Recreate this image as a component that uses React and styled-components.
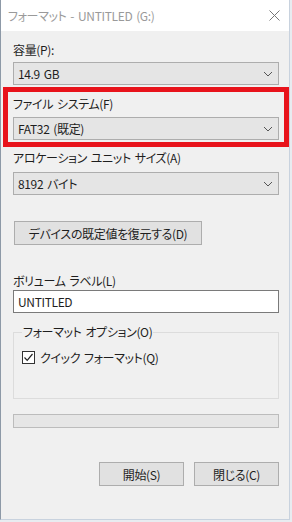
import React from "react";
import styled, { createGlobalStyle } from "styled-components";

const GlobalStyle = createGlobalStyle`
  html, body {
    margin: 0;
    padding: 0;
    background: #e8ecf0;
  }
  body {
    font-family: "Noto Sans CJK JP", "Liberation Sans", sans-serif;
    font-feature-settings: "palt" 1;
    font-size: 12px;
    letter-spacing: -0.35px;
    word-spacing: 1.5px;
    color: #1e1e1e;
  }
`;

const Window = styled.div`
  width: 290px;
  height: 520px;
  box-sizing: border-box;
  border-left: 1px solid #8d99a7;
  border-right: 1px solid #c8d2de;
  border-bottom: 1px solid #c8d2de;
  background: #f0f0f0;
  display: flex;
  flex-direction: column;
`;

const TitleBar = styled.div`
  height: 31px;
  flex-shrink: 0;
  background: #fff;
  display: flex;
  align-items: center;
  justify-content: space-between;
  padding: 0 9px 0 7px;
  color: #9a9a9a;
  font-size: 12px;
  & svg {
    display: block;
  }
`;

const Body = styled.div`
  display: flex;
  flex-direction: column;
  padding: 0 10px 0 12px;
`;

const Label = styled.div`
  line-height: 16px;
  height: 16px;
  margin-top: ${(p) => p.$top || 0}px;
  white-space: nowrap;
`;

const Select = styled.div`
  height: 23px;
  box-sizing: border-box;
  margin-top: ${(p) => p.$top || 0}px;
  border: 1px solid #adadad;
  background: #e5e5e5;
  display: flex;
  align-items: center;
  justify-content: space-between;
  padding: 0 5px 0 4px;
  & svg {
    display: block;
  }
`;

const Highlight = styled.div`
  margin: 2px -10px 0 -10px;
  border: 5px solid #e8131b;
  padding: 4px 5px 2px;
  display: flex;
  flex-direction: column;
`;

const Button = styled.button`
  height: 24px;
  width: ${(p) => p.$width}px;
  box-sizing: border-box;
  border: 1px solid #adadad;
  background: #e1e1e1;
  font: inherit;
  letter-spacing: inherit;
  word-spacing: inherit;
  color: #1e1e1e;
  padding: 0;
  margin: 0;
`;

const ResetButton = styled(Button)`
  margin-top: 26px;
  margin-left: 1px;
  align-self: flex-start;
`;

const TextInput = styled.div`
  height: 23px;
  box-sizing: border-box;
  margin-top: 1px;
  border: 1px solid #7a7a7a;
  background: #fff;
  display: flex;
  align-items: center;
  padding: 0 4px;
`;

const Group = styled.fieldset`
  margin: 11px 0 0;
  padding: 0 8px 34px;
  border: 1px solid #dcdcdc;
  min-width: 0;
`;

const Legend = styled.legend`
  padding: 0 1px;
  margin-left: 0;
  line-height: 16px;
`;

const CheckRow = styled.label`
  display: flex;
  align-items: center;
  gap: 5px;
  margin-top: 10px;
  height: 14px;
`;

const CheckBox = styled.span`
  width: 13px;
  height: 13px;
  box-sizing: border-box;
  border: 1px solid #333;
  background: #fff;
  display: flex;
  align-items: center;
  justify-content: center;
`;

const Progress = styled.div`
  height: 14px;
  box-sizing: border-box;
  margin-top: 15px;
  border: 1px solid #bcbcbc;
  background: #e6e6e6;
`;

const Actions = styled.div`
  display: flex;
  justify-content: flex-end;
  gap: 10px;
  margin-top: 34px;
`;

const Chevron = () => (
  <svg width="10" height="6" viewBox="0 0 10 6">
    <polyline points="1,1 5,5 9,1" fill="none" stroke="#555" strokeWidth="1" />
  </svg>
);

export default function App() {
  return (
    <>
      <GlobalStyle />
      <Window>
        <TitleBar>
          <span>フォーマット - UNTITLED (G:)</span>
          <svg width="11" height="11" viewBox="0 0 11 11">
            <path d="M0.5 0.5 L10.5 10.5 M10.5 0.5 L0.5 10.5" stroke="#777" strokeWidth="1" />
          </svg>
        </TitleBar>
        <Body>
          <Label $top={11}>容量(P):</Label>
          <Select $top={4}>
            <span>14.9 GB</span>
            <Chevron />
          </Select>

          <Highlight>
            <Label>ファイル システム(F)</Label>
            <Select $top={5}>
              <span>FAT32 (既定)</span>
              <Chevron />
            </Select>
          </Highlight>

          <Label $top={3}>アロケーション ユニット サイズ(A)</Label>
          <Select $top={6}>
            <span>8192 バイト</span>
            <Chevron />
          </Select>

          <ResetButton $width={188}>デバイスの既定値を復元する(D)</ResetButton>

          <Label $top={28}>ボリューム ラベル(L)</Label>
          <TextInput>UNTITLED</TextInput>

          <Group>
            <Legend>フォーマット オプション(O)</Legend>
            <CheckRow>
              <CheckBox>
                <svg width="11" height="11" viewBox="0 0 11 11">
                  <polyline points="1.5,5.5 4.2,8.3 9.5,2" fill="none" stroke="#222" strokeWidth="1.2" />
                </svg>
              </CheckBox>
              <span>クイック フォーマット(Q)</span>
            </CheckRow>
          </Group>

          <Progress />

          <Actions>
            <Button $width={85}>開始(S)</Button>
            <Button $width={85}>閉じる(C)</Button>
          </Actions>
        </Body>
      </Window>
    </>
  );
}
